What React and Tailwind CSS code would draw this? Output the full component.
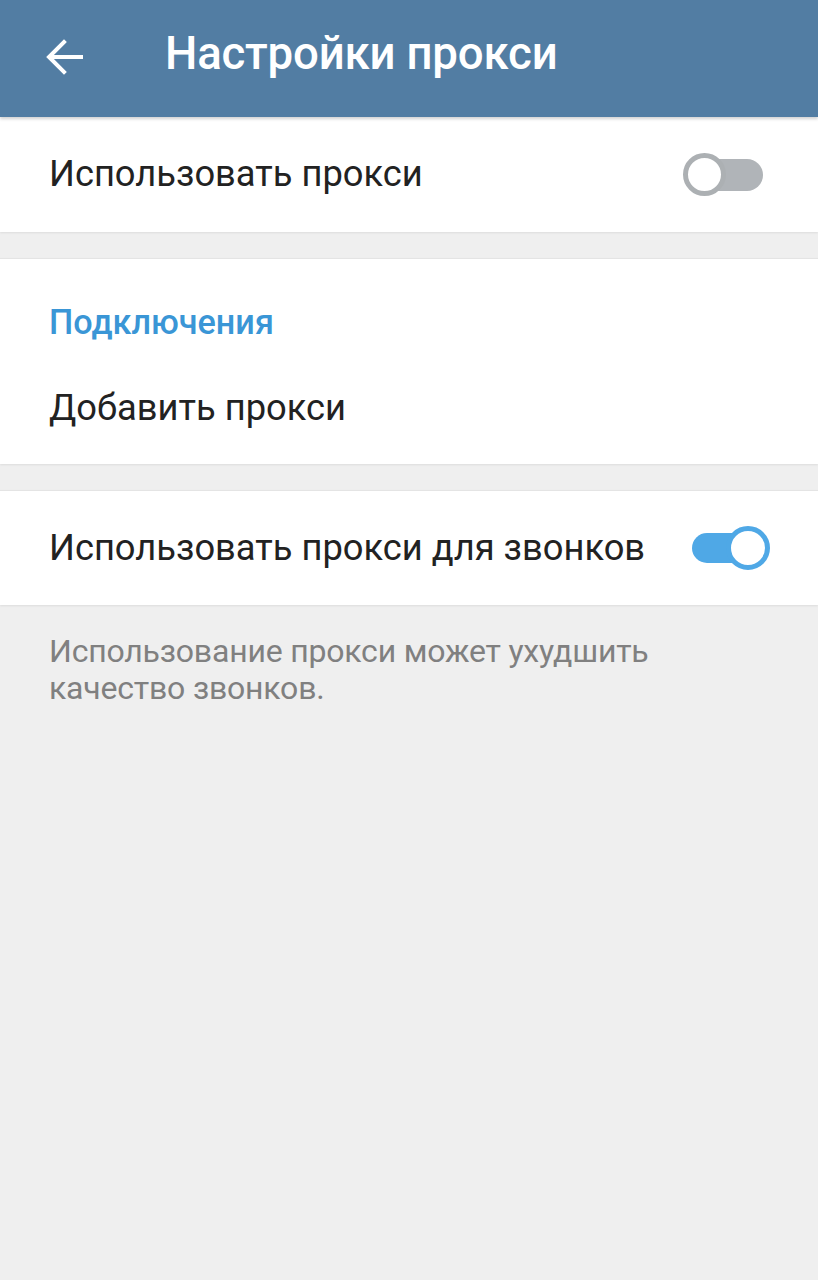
import { useState } from "react";

const Toggle = ({ on, onClick }) => {
  if (on) {
    return (
      <button type="button" onClick={onClick} className="relative w-[78px] h-[46px] shrink-0">
        <span className="absolute left-0 top-[8px] w-[60px] h-[30px] rounded-full bg-[#4fa8e6]" />
        <span className="absolute right-0 top-[1px] w-[44px] h-[44px] rounded-full bg-white border-[5px] border-[#4fa8e6]" />
      </button>
    );
  }
  return (
    <button type="button" onClick={onClick} className="relative w-[80px] h-[46px] shrink-0">
      <span className="absolute right-0 top-[7px] w-[60px] h-[32px] rounded-full bg-[#b0b4b8]" />
      <span className="absolute left-0 top-[1px] w-[43px] h-[43px] rounded-full bg-white border-[5px] border-[#acb0b3]" />
    </button>
  );
};

const App = () => {
  const [useProxy, setUseProxy] = useState(false);
  const [useForCalls, setUseForCalls] = useState(true);

  return (
    <div className="min-h-screen bg-[#efefef] font-['Roboto',sans-serif]">
      <header className="relative z-10 h-[117px] bg-[#527da3] flex items-center shadow-[0_2px_3px_rgba(0,0,0,0.18)]">
        <button type="button" className="ml-[42px] mb-[4px] w-[44px] h-[44px] flex items-center justify-center">
          <svg width="40" height="40" viewBox="0 0 40 40" fill="none" stroke="white" strokeWidth="4" strokeLinecap="square">
            <path d="M37 20H6" />
            <path d="M20 5L5 20L20 35" />
          </svg>
        </button>
        <h1 className="ml-[79px] text-white text-[45.6px] font-medium tracking-[-0.2px] leading-none pb-[10px]">
          Настройки прокси
        </h1>
      </header>

      <section className="bg-white h-[115px] flex items-center justify-between pl-[49px] pr-[55px] shadow-[0_1px_2px_rgba(0,0,0,0.08)]">
        <span className="text-[36.3px] text-[#222222] leading-none">Использовать прокси</span>
        <Toggle on={useProxy} onClick={() => setUseProxy(!useProxy)} />
      </section>

      <div className="h-[27px]" />

      <section className="bg-white h-[205px] flex flex-col shadow-[0_1px_2px_rgba(0,0,0,0.08),0_-1px_1px_rgba(0,0,0,0.04)]">
        <div className="pl-[49px] pt-[46px] text-[34.2px] font-medium text-[#3a96d6] leading-none">
          Подключения
        </div>
        <div className="pl-[49px] pt-[51px] text-[36.3px] text-[#222222] leading-none">
          Добавить прокси
        </div>
      </section>

      <div className="h-[27px]" />

      <section className="bg-white h-[114px] flex items-center justify-between pl-[49px] pr-[48px] shadow-[0_1px_2px_rgba(0,0,0,0.08),0_-1px_1px_rgba(0,0,0,0.04)]">
        <span className="text-[36.3px] text-[#222222] leading-none">Использовать прокси для звонков</span>
        <Toggle on={useForCalls} onClick={() => setUseForCalls(!useForCalls)} />
      </section>

      <p className="pl-[49px] pr-[40px] pt-[28px] text-[32px] leading-[37px] text-[#808080] tracking-[-0.2px]">
        Использование прокси может ухудшить
        <br />
        качество звонков.
      </p>
    </div>
  );
};

export default App;
